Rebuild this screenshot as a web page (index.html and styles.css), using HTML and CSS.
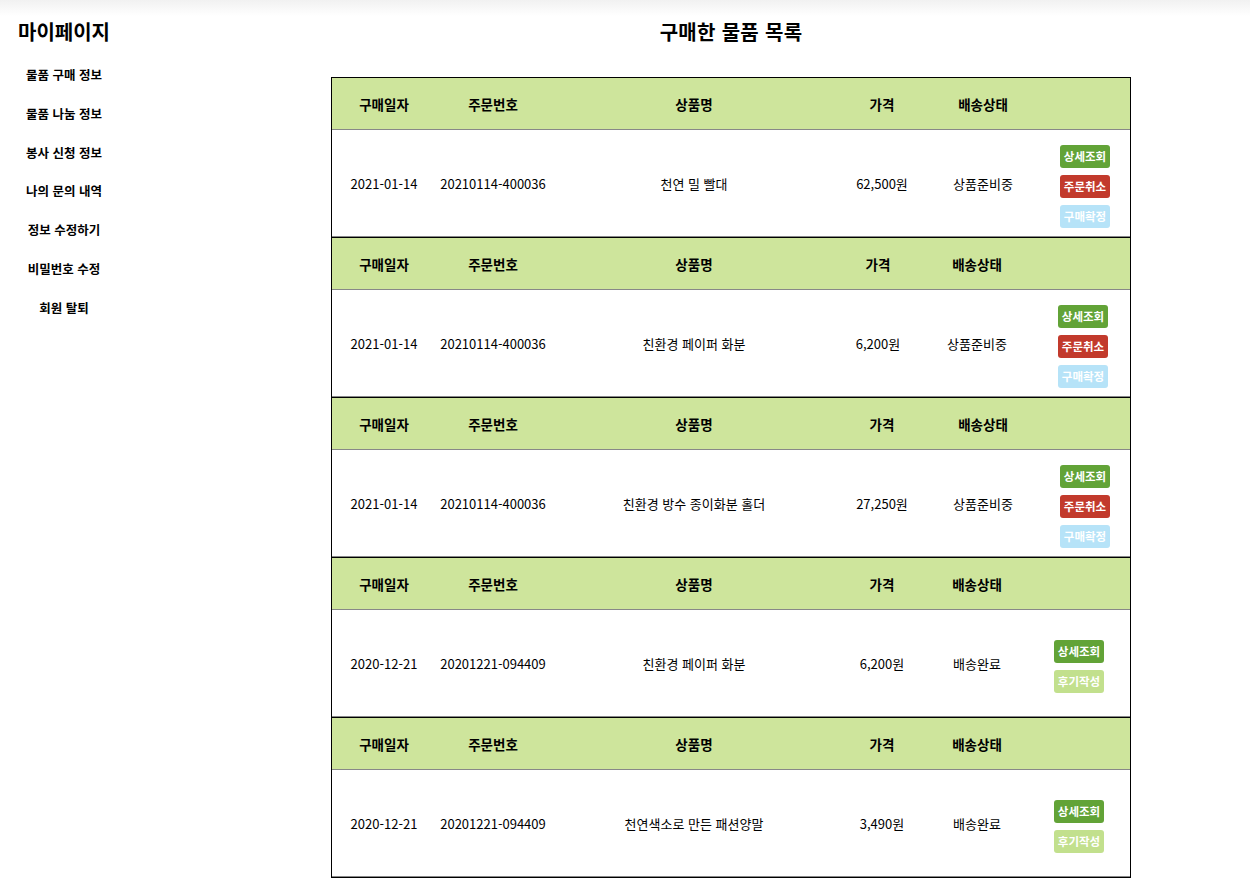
FILE: index.html
```html
<!DOCTYPE html>
<html lang="ko">
<head>
<meta charset="utf-8">
<title>마이페이지</title>
<link rel="stylesheet" href="styles.css">
</head>
<body>
<div class="page">
  <aside class="side">
    <h1 class="side-title">마이페이지</h1>
    <ul class="side-menu">
      <li>물품 구매 정보</li>
      <li>물품 나눔 정보</li>
      <li>봉사 신청 정보</li>
      <li>나의 문의 내역</li>
      <li>정보 수정하기</li>
      <li>비밀번호 수정</li>
      <li>회원 탈퇴</li>
    </ul>
  </aside>
  <main class="main">
    <h2 class="main-title">구매한 물품 목록</h2>
    <div class="orders">
      <div class="order cols-a">
        <div class="row head"><span>구매일자</span><span>주문번호</span><span>상품명</span><span>가격</span><span>배송상태</span><span></span></div>
        <div class="row body"><span>2021-01-14</span><span>20210114-400036</span><span>천연 밀 빨대</span><span>62,500원</span><span>상품준비중</span>
          <span class="btns"><a class="btn b-detail">상세조회</a><a class="btn b-cancel">주문취소</a><a class="btn b-confirm">구매확정</a></span></div>
      </div>
      <div class="order cols-b">
        <div class="row head"><span>구매일자</span><span>주문번호</span><span>상품명</span><span>가격</span><span>배송상태</span><span></span></div>
        <div class="row body"><span>2021-01-14</span><span>20210114-400036</span><span>친환경 페이퍼 화분</span><span>6,200원</span><span>상품준비중</span>
          <span class="btns"><a class="btn b-detail">상세조회</a><a class="btn b-cancel">주문취소</a><a class="btn b-confirm">구매확정</a></span></div>
      </div>
      <div class="order cols-a">
        <div class="row head"><span>구매일자</span><span>주문번호</span><span>상품명</span><span>가격</span><span>배송상태</span><span></span></div>
        <div class="row body"><span>2021-01-14</span><span>20210114-400036</span><span>친환경 방수 종이화분 홀더</span><span>27,250원</span><span>상품준비중</span>
          <span class="btns"><a class="btn b-detail">상세조회</a><a class="btn b-cancel">주문취소</a><a class="btn b-confirm">구매확정</a></span></div>
      </div>
      <div class="order cols-c">
        <div class="row head"><span>구매일자</span><span>주문번호</span><span>상품명</span><span>가격</span><span>배송상태</span><span></span></div>
        <div class="row body"><span>2020-12-21</span><span>20201221-094409</span><span>친환경 페이퍼 화분</span><span>6,200원</span><span>배송완료</span>
          <span class="btns"><a class="btn b-detail">상세조회</a><a class="btn b-review">후기작성</a></span></div>
      </div>
      <div class="order cols-c">
        <div class="row head"><span>구매일자</span><span>주문번호</span><span>상품명</span><span>가격</span><span>배송상태</span><span></span></div>
        <div class="row body"><span>2020-12-21</span><span>20201221-094409</span><span>천연색소로 만든 패션양말</span><span>3,490원</span><span>배송완료</span>
          <span class="btns"><a class="btn b-detail">상세조회</a><a class="btn b-review">후기작성</a></span></div>
      </div>
    </div>
  </main>
</div>
</body>
</html>
```

FILE: styles.css
```css
html {
  background: #fff linear-gradient(to bottom, #f1f1f1, #ffffff) no-repeat;
  background-size: 100% 16px;
}
body {
  margin: 0;
  font-family: "Noto Sans CJK KR", "Noto Sans", sans-serif;
  color: #000;
  font-size: 13px;
}
.page {
  display: flex;
  align-items: flex-start;
}
.side {
  width: 128px;
  flex: none;
  text-align: center;
  padding-top: 20px;
}
.side-title {
  margin: 0;
  font-size: 20px;
  line-height: 24px;
  font-weight: 700;
}
.side-menu {
  list-style: none;
  margin: 12px 0 0;
  padding: 0;
}
.side-menu li {
  height: 38.8px;
  line-height: 38.8px;
  font-size: 12.5px;
  font-weight: 700;
}
.main {
  margin-left: 203px;
  width: 800px;
  padding-top: 20px;
}
.main-title {
  margin: 0 0 33px;
  text-align: center;
  font-size: 20px;
  line-height: 24px;
  font-weight: 700;
  letter-spacing: 0.3px;
}
.order {
  border: 1px solid #000;
  border-bottom: none;
  width: 798px;
}
.order:last-child {
  border-bottom: 1px solid #000;
}
.row {
  display: grid;
  align-items: center;
  text-align: center;
  border-bottom: 1px solid #888;
}
.cols-a .row { grid-template-columns: 104px 114px 288px 88px 114px 90px; }
.cols-b .row { grid-template-columns: 104px 114px 288px 80px 118px 94px; }
.cols-c .row { grid-template-columns: 104px 114px 288px 88px 102px 102px; }
.head {
  height: 51px;
  background: #cee59c;
  font-weight: 700;
  font-size: 13.5px;
}
.body {
  height: 106px;
}
.btns {
  display: flex;
  flex-direction: column;
  align-items: center;
  gap: 7px;
  padding-top: 6px;
}
.btn {
  display: block;
  width: 50px;
  height: 23px;
  line-height: 23px;
  border-radius: 3px;
  color: #fff;
  font-size: 11.5px;
  font-weight: 700;
  text-align: center;
}
.b-detail { background: #62a337; }
.b-cancel { background: #c23a2c; }
.b-confirm { background: #b6e3f8; }
.b-review { background: #c2e08d; }
```
